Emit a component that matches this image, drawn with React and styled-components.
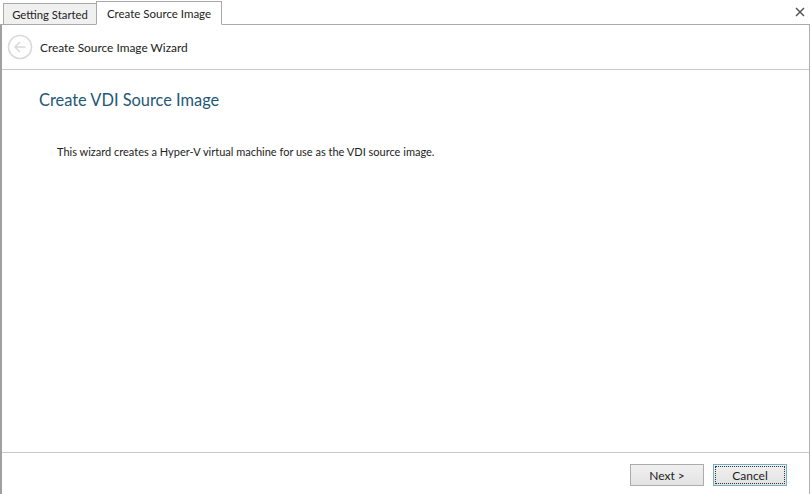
import React from "react";
import styled, { createGlobalStyle } from "styled-components";

const Global = createGlobalStyle`
  html, body { margin: 0; padding: 0; background: #ffffff; }
  body { font-family: Lato, "Noto Sans", sans-serif; font-size: 12px; color: #222; }
  #root { width: 811px; height: 494px; }
`;

const Window = styled.div`
  width: 811px;
  height: 494px;
  display: flex;
  flex-direction: column;
  background: #fff;
`;

const TabStrip = styled.div`
  height: 25px;
  display: flex;
  align-items: flex-end;
  position: relative;
  box-sizing: border-box;
`;

const TabLead = styled.div`
  width: 3px;
  height: 1px;
  align-self: flex-end;
  background: #a9a9a9;
`;

const Tab = styled.div`
  box-sizing: border-box;
  width: ${(p) => (p.$active ? "126px" : "94px")};
  height: ${(p) => (p.$active ? "24px" : "22px")};
  display: flex;
  align-items: center;
  justify-content: center;
  background: ${(p) => (p.$active ? "#ffffff" : "#f0f0f0")};
  border: 1px solid #a9a9a9;
  border-bottom: ${(p) => (p.$active ? "1px solid #ffffff" : "1px solid #a9a9a9")};
  margin-left: ${(p) => (p.$active ? "-1px" : "0")};
  font-size: ${(p) => (p.$active ? "11.5px" : "11.3px")};
  color: #222;
  white-space: nowrap;
  padding-top: ${(p) => (p.$active ? "0" : "1px")};
`;

const TabFill = styled.div`
  flex: 1;
  align-self: stretch;
  border-bottom: 1px solid #a9a9a9;
  margin-right: 1px;
`;

const CloseBtn = styled.div`
  position: absolute;
  right: 6px;
  top: 7px;
  width: 10px;
  height: 10px;
  display: flex;
`;

const Panel = styled.div`
  flex: 1;
  display: flex;
  flex-direction: column;
  border-left: 2px solid #a0a0a0;
  border-right: 1px solid #b0b0b0;
  margin-right: 1px;
`;

const Header = styled.div`
  height: 44px;
  display: flex;
  align-items: center;
  gap: 7px;
  padding-left: 5px;
  border-bottom: 1px solid #c8c8c8;
`;

const HeaderTitle = styled.div`
  font-size: 11.9px;
  color: #222;
`;

const Body = styled.div`
  flex: 1;
  padding: 19px 0 0 37px;
`;

const Title = styled.h1`
  margin: 0;
  font-weight: normal;
  font-size: 16.4px;
  color: #1e5876;
  line-height: 22px;
`;

const Desc = styled.p`
  margin: 33px 0 0 18px;
  font-size: 11px;
  line-height: 16px;
  color: #222;
`;

const Footer = styled.div`
  height: 42px;
  border-top: 1px solid #c8c8c8;
  display: flex;
  justify-content: flex-end;
  align-items: flex-start;
  padding: 11px 22px 0 0;
  gap: 9px;
  box-sizing: border-box;
`;

const Button = styled.button`
  box-sizing: border-box;
  width: 74px;
  height: 22px;
  font-family: inherit;
  font-size: 12px;
  color: #222;
  background: linear-gradient(#f0f0f0, #e3e3e3);
  border: 1px solid ${(p) => (p.$default ? "#76aec4" : "#acacac")};
  padding: 0;
  display: flex;
  align-items: center;
  justify-content: center;
  outline: ${(p) => (p.$default ? "1px dotted #333" : "none")};
  outline-offset: -3px;
`;

function BackIcon() {
  return (
    <svg width="26" height="26" viewBox="0 0 26 26">
      <circle cx="13" cy="13" r="11.5" fill="none" stroke="#d9d9d9" strokeWidth="1.6" />
      <path d="M18 13H8.5M12.5 8.5L8 13l4.5 4.5" fill="none" stroke="#d9d9d9" strokeWidth="1.6" strokeLinecap="round" strokeLinejoin="round" />
    </svg>
  );
}

export default function App() {
  return (
    <>
      <Global />
      <Window>
        <TabStrip>
          <TabLead />
          <Tab>Getting Started</Tab>
          <Tab $active>Create Source Image</Tab>
          <TabFill />
          <CloseBtn>
            <svg width="10" height="10" viewBox="0 0 10 10">
              <path d="M1 1L9 9M9 1L1 9" stroke="#555" strokeWidth="1.5" />
            </svg>
          </CloseBtn>
        </TabStrip>
        <Panel>
          <Header>
            <BackIcon />
            <HeaderTitle>Create Source Image Wizard</HeaderTitle>
          </Header>
          <Body>
            <Title>Create VDI Source Image</Title>
            <Desc>This wizard creates a Hyper-V virtual machine for use as the VDI source image.</Desc>
          </Body>
          <Footer>
            <Button>Next &gt;</Button>
            <Button $default>Cancel</Button>
          </Footer>
        </Panel>
      </Window>
    </>
  );
}
